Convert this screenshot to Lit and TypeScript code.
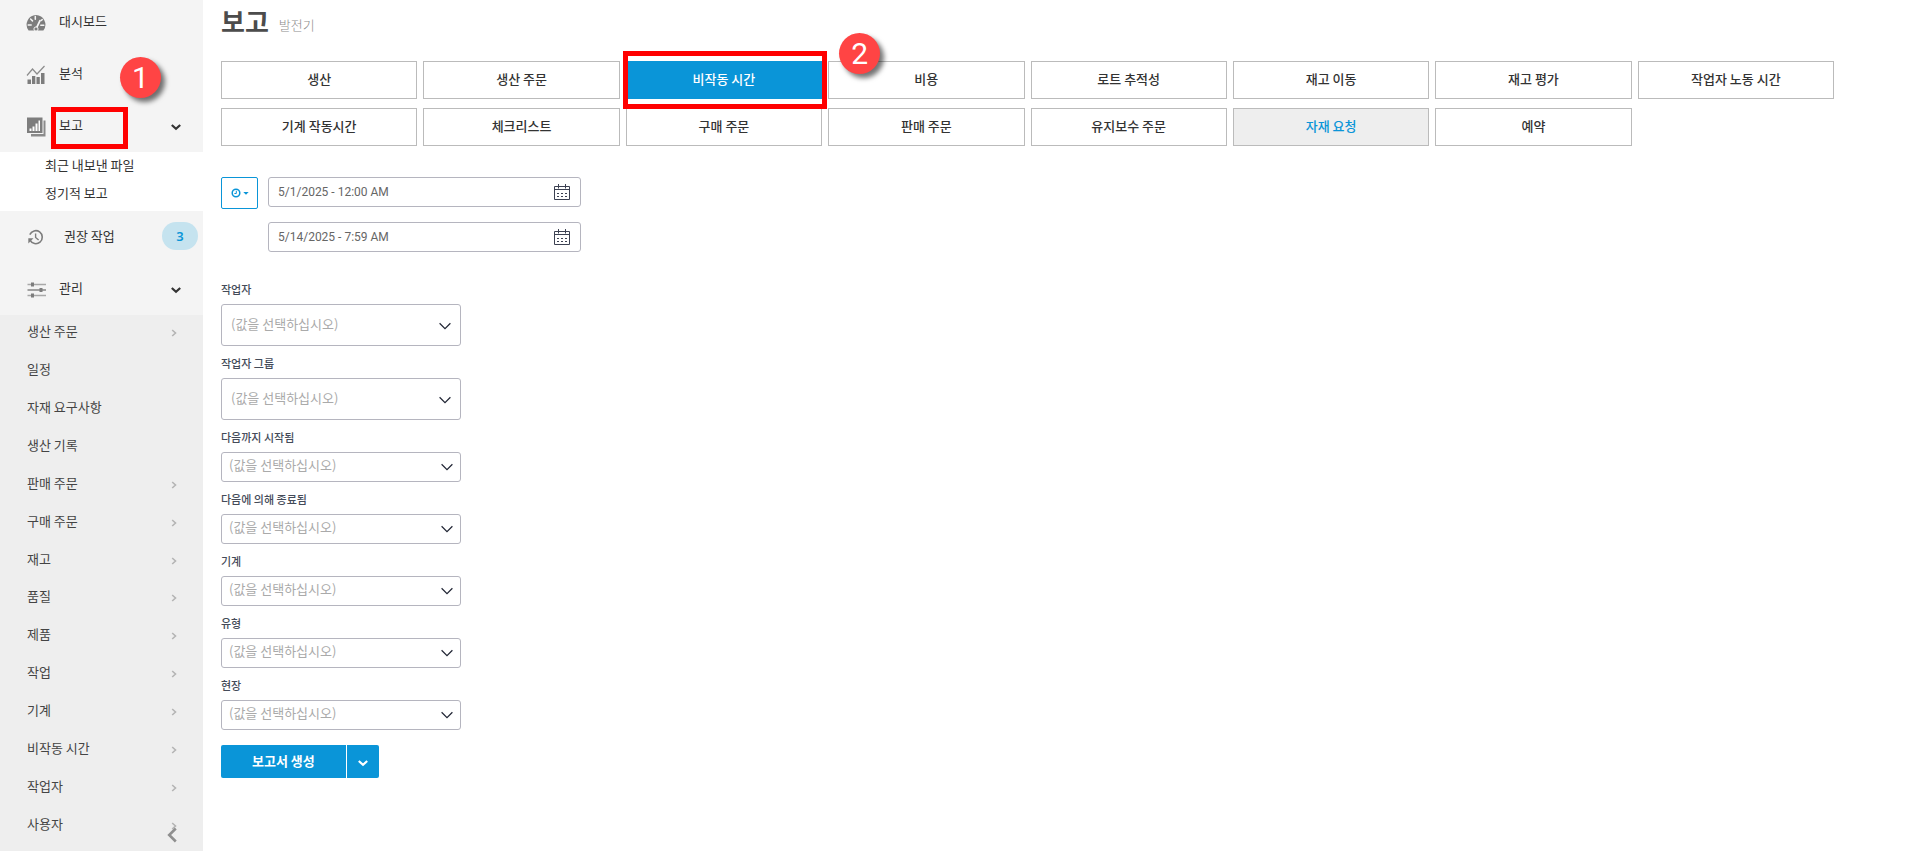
import { LitElement, css, html, svg, nothing } from "lit";
import { customElement, state } from "lit/decorators.js";
import { classMap } from "lit/directives/class-map.js";

const gaugeIcon = svg`
  <svg class="icon" viewBox="0 0 20 20" aria-hidden="true">
    <path d="M2.600 17.400A9.600 9.600 0 0 1 10 2a9.600 9.600 0 0 1 7.400 15.400H11.800a2 2 0 0 0-3.600 0z" fill="#7d7d7d"/>
    <path d="M10.200 15.600 14 7.600" stroke="#f4f4f4" stroke-width="1.800" stroke-linecap="round"/>
    <circle cx="10" cy="16" r="2.100" fill="#7d7d7d" stroke="#f4f4f4" stroke-width="1"/>
    <path d="M9.300 3.600v2.600M4.600 6l1.900 1.900M2.200 12h3M14.800 12.200h3M16.200 6.600l-1 .9" stroke="#f4f4f4" stroke-width="1.500" stroke-linecap="round"/>
  </svg>`;

const analyticsIcon = svg`
  <svg class="icon" viewBox="0 0 20 20" aria-hidden="true">
    <path d="M1.500 14.500h3.500v4.500h-3.500zM6 11h3.300v8H6zM10.500 12h3.300v7h-3.300zM15 8h3.500v11H15z" fill="#7d7d7d"/>
    <path d="M1 10.500 6.500 4l4.500 5L18.500 1" fill="none" stroke="#8c8c8c" stroke-width="1.200"/>
  </svg>`;

const reportIcon = svg`
  <svg class="icon" viewBox="0 0 20 20" aria-hidden="true">
    <path d="M1 .5h15.500V16H1z" fill="#7d7d7d"/>
    <path d="M17.500 3.500H19.500v16H5V17h12.500z" fill="#8a8a8a"/>
    <path d="M3.500 11.500h2V14h-2zM6.500 9.500h2V14h-2zM9.500 6.500h2V14h-2zM12.500 3.500h1.500V14h-1.500z" fill="#fff"/>
  </svg>`;

const historyIcon = svg`
  <svg class="icon" viewBox="0 0 20 20" aria-hidden="true">
    <path d="M4 12.200A6.500 6.500 0 1 0 3.800 6.600" fill="none" stroke="#7d7d7d" stroke-width="1.600"/>
    <path d="M2.300 15.500v-5.200h5.200z" fill="#7d7d7d"/>
    <path d="M9.600 5.500v4l3 2.500" fill="none" stroke="#7d7d7d" stroke-width="1.400"/>
  </svg>`;

const slidersIcon = svg`
  <svg class="icon" viewBox="0 0 20 20" aria-hidden="true">
    <path d="M1.500 4.500h18.500M1.500 15.500h18.500" stroke="#a8a8a8" stroke-width="1.600"/>
    <path d="M1.500 10h18.500" stroke="#7d7d7d" stroke-width="1.400"/>
    <path d="M5 2.500h3v4H5zM13.500 8h3v4h-3zM5 13.500h3v4H5z" fill="#7d7d7d"/>
  </svg>`;

const boldChevronDown = svg`
  <svg class="caret" viewBox="0 0 12 8" aria-hidden="true">
    <path d="m1.800 2 4.200 3.800L10.200 2" fill="none" stroke="currentColor" stroke-width="2.200"/>
  </svg>`;

const chevronRight = svg`
  <svg class="arrow" viewBox="0 0 6 8" aria-hidden="true">
    <path d="m1.200 1 3.300 3-3.300 3" fill="none" stroke="currentColor" stroke-width="1.600"/>
  </svg>`;

const thinChevronDown = svg`
  <svg class="select-mark" viewBox="0 0 12 8" aria-hidden="true">
    <path d="M.6 1.300 6 6.600l5.400-5.300" fill="none" stroke="#1f2433" stroke-width="1.200"/>
  </svg>`;

const calendarIcon = svg`
  <svg class="calendar" viewBox="0 0 16 16" aria-hidden="true">
    <path d="M.5 2.500h15v13H.5zM.5 5.500h15M4.500 0v4.500M11.500 0v4.500" fill="none" stroke="#3c4152"/>
    <path d="M3 9.500h10M3 12.500h10" fill="none" stroke="#3c4152" stroke-dasharray="2 2"/>
  </svg>`;

const clockIcon = svg`
  <svg class="clock" viewBox="0 0 18 10" aria-hidden="true">
    <circle cx="5" cy="5" r="3.800" fill="none" stroke="currentColor" stroke-width="1.500"/>
    <path d="M5.300 2.800v2.700H3.400" fill="none" stroke="currentColor" stroke-width="1"/>
    <path d="M12.300 4h5.400L15 6.800z" fill="currentColor"/>
  </svg>`;

interface ManageItem {
  label: string;
  nested: boolean;
}

interface Field {
  id: string;
  label: string;
  tall?: boolean;
}

@customElement("app-root")
export class AppRoot extends LitElement {
  @state() private activeTab = "비작동 시간";

  private readonly hoveredTab = "자재 요청";

  private readonly tabs = [
    "생산", "생산 주문", "비작동 시간", "비용", "로트 추적성", "재고 이동", "재고 평가", "작업자 노동 시간",
    "기계 작동시간", "체크리스트", "구매 주문", "판매 주문", "유지보수 주문", "자재 요청", "예약",
  ];

  private readonly manageItems: ManageItem[] = [
    { label: "생산 주문", nested: true },
    { label: "일정", nested: false },
    { label: "자재 요구사항", nested: false },
    { label: "생산 기록", nested: false },
    { label: "판매 주문", nested: true },
    { label: "구매 주문", nested: true },
    { label: "재고", nested: true },
    { label: "품질", nested: true },
    { label: "제품", nested: true },
    { label: "작업", nested: true },
    { label: "기계", nested: true },
    { label: "비작동 시간", nested: true },
    { label: "작업자", nested: true },
    { label: "사용자", nested: true },
  ];

  private readonly fields: Field[] = [
    { id: "worker", label: "작업자", tall: true },
    { id: "worker-group", label: "작업자 그룹", tall: true },
    { id: "started-by", label: "다음까지 시작됨" },
    { id: "ended-by", label: "다음에 의해 종료됨" },
    { id: "machine", label: "기계" },
    { id: "type", label: "유형" },
    { id: "site", label: "현장" },
  ];

  static styles = css`
    :host {
      display: block;
      font-family: "Noto Sans CJK KR", "Noto Sans", sans-serif;
      font-size: 13px;
      line-height: 20px;
      color: #333;
      background: #fff;
    }
    * {
      box-sizing: border-box;
    }
    a {
      color: inherit;
      text-decoration: none;
    }
    button,
    input,
    select {
      font: inherit;
      margin: 0;
    }
    button {
      cursor: pointer;
    }
    ul {
      list-style: none;
      margin: 0;
      padding: 0;
    }
    svg {
      display: block;
      flex: none;
    }

    .layout {
      display: grid;
      grid-template-columns: 203px minmax(0, 1fr);
      min-height: 100vh;
    }

    .sidebar {
      position: relative;
      background: #f4f4f4;
      display: flex;
      flex-direction: column;
    }
    .group {
      display: flex;
      flex-direction: column;
      gap: 32px;
      padding: 11px 21px 17px 26px;
    }
    .group-lower {
      padding-top: 15px;
    }
    .entry {
      display: flex;
      align-items: center;
      height: 20px;
    }
    .icon {
      width: 20px;
      height: 20px;
      margin: 4px 13px 0 0;
    }
    .entry-label {
      position: relative;
      flex: 1;
    }
    .entry-wide .entry-label {
      padding-left: 5px;
    }
    .caret {
      width: 12px;
      height: 8px;
      margin-top: 4px;
    }
    .count {
      width: 36px;
      margin-right: -16px;
      border-radius: 14px;
      background: #c5e3ef;
      color: #0a95d8;
      font-family: "Noto Sans", sans-serif;
      font-weight: 600;
      line-height: 28px;
      text-align: center;
    }
    .submenu {
      background: #fff;
      padding: 0 0 3px 45px;
    }
    .submenu a {
      display: block;
      padding-bottom: 2px;
      line-height: 26px;
    }
    .manage {
      flex: 1;
      background: #eee;
      color: #444;
    }
    .manage a {
      display: flex;
      align-items: center;
      justify-content: space-between;
      padding: 6px 26px 12px 27px;
    }
    .manage li:nth-child(n + 8) a {
      padding-top: 5px;
      padding-bottom: 13px;
    }
    .arrow {
      width: 6px;
      height: 8px;
      margin-top: 4px;
      color: #b4b4b4;
    }
    .collapse {
      position: absolute;
      right: 26px;
      bottom: 8px;
      border: 0;
      padding: 0;
      background: none;
      color: #8f8f8f;
    }
    .collapse svg {
      width: 10px;
      height: 16px;
    }

    .frame {
      position: absolute;
      z-index: 1;
      border: 5px solid #ff0000;
      pointer-events: none;
    }
    .step {
      position: absolute;
      z-index: 2;
      width: 41px;
      height: 41px;
      border-radius: 50%;
      background: #ff4444;
      box-shadow: 4px 4px 5px rgba(0, 0, 0, 0.55);
      color: #fff;
      font: 30px/41px Roboto, sans-serif;
      text-align: center;
      pointer-events: none;
    }
    .frame-menu {
      left: -8px;
      top: -8px;
      width: 77px;
      height: 42px;
    }
    .step-menu {
      left: 61px;
      top: -58px;
    }
    .frame-tab {
      inset: -10px -5px -10px -3px;
    }
    .step-tab {
      right: -58px;
      top: -28px;
    }

    .main {
      padding: 3px 72px 40px 18px;
    }
    .heading {
      display: flex;
      align-items: center;
      gap: 10px;
      margin-bottom: 22px;
    }
    h1 {
      margin: 0;
      font-size: 26px;
      line-height: 36px;
      font-weight: 700;
      color: #4c4c4c;
    }
    .subtitle {
      padding-top: 8px;
      color: #8c8c8c;
      font-weight: 300;
    }
    .tabs {
      display: grid;
      grid-template-columns: repeat(8, minmax(0, 1fr));
      gap: 9px 6px;
    }
    .tab-cell {
      position: relative;
      display: grid;
    }
    .tab {
      height: 38px;
      padding: 0 0 2px;
      border: 1px solid #bbb;
      background: #fff;
      color: #333;
      font-weight: 500;
    }
    .tab.hovered {
      background: #eee;
      color: #0a95d8;
    }
    .tab.active {
      background: #0a95d8;
      border-color: #0a95d8;
      color: #fff;
    }

    .dates {
      display: flex;
      align-items: flex-start;
      gap: 10px;
      margin: 31px 0 29px;
    }
    .range {
      display: grid;
      place-items: center;
      width: 37px;
      height: 32px;
      padding: 0;
      border: 1px solid #0a95d8;
      border-radius: 2px;
      background: #fff;
      color: #0a95d8;
    }
    .clock {
      width: 18px;
      height: 10px;
    }
    .date-list {
      display: grid;
      gap: 15px;
      width: 313px;
    }
    .overlay {
      display: grid;
      align-items: center;
    }
    .overlay > * {
      grid-area: 1 / 1;
    }
    .date-input {
      width: 100%;
      height: 30px;
      padding: 0 40px 1px 9px;
      border: 1px solid #b5b5bf;
      border-radius: 3px;
      background: #fff;
      color: #666;
      font-family: Roboto, sans-serif;
      font-size: 12px;
    }
    .calendar {
      width: 16px;
      height: 16px;
      justify-self: end;
      margin-right: 11px;
      pointer-events: none;
    }

    .fields {
      display: grid;
      gap: 9px;
      width: 240px;
    }
    .field {
      display: grid;
      gap: 7px;
    }
    .field label {
      font-size: 11px;
      line-height: 16px;
      font-weight: 500;
      color: #444b59;
    }
    .field select {
      appearance: none;
      width: 100%;
      height: 30px;
      padding: 0 28px 4px 7px;
      border: 1px solid #b5b5bf;
      border-radius: 3px;
      background: #fff;
      color: #aaa;
    }
    .field.tall select {
      height: 42px;
      padding-left: 9px;
      padding-bottom: 3px;
    }
    .select-mark {
      width: 12px;
      height: 8px;
      justify-self: end;
      margin-right: 8px;
      pointer-events: none;
    }
    .tall .select-mark {
      margin: 2px 10px 0 0;
    }

    .actions {
      display: flex;
      gap: 1px;
      margin-top: 15px;
    }
    .primary {
      display: grid;
      place-items: center;
      height: 33px;
      border: 0;
      padding: 0 31px 1px;
      background: #0a95d8;
      color: #fff;
      font-weight: 700;
      border-radius: 2px 0 0 2px;
    }
    .primary.more {
      padding: 0 10px;
      border-radius: 0 2px 2px 0;
    }
    .more .caret {
      margin-top: 2px;
    }
  `;

  private renderSidebar() {
    return html`
      <nav class="sidebar" aria-label="메뉴">
        <div class="group">
          <a class="entry" href="#dashboard">${gaugeIcon}<span class="entry-label">대시보드</span></a>
          <a class="entry" href="#analytics">${analyticsIcon}<span class="entry-label">분석</span></a>
          <a class="entry" href="#reports">
            ${reportIcon}
            <span class="entry-label">보고
              <span class="frame frame-menu"></span>
              <span class="step step-menu">1</span>
            </span>
            ${boldChevronDown}
          </a>
        </div>
        <ul class="submenu">
          <li><a href="#exports">최근 내보낸 파일</a></li>
          <li><a href="#periodic">정기적 보고</a></li>
        </ul>
        <div class="group group-lower">
          <a class="entry entry-wide" href="#recommended">
            ${historyIcon}<span class="entry-label">권장 작업</span><span class="count">3</span>
          </a>
          <a class="entry" href="#manage">
            ${slidersIcon}<span class="entry-label">관리</span>${boldChevronDown}
          </a>
        </div>
        <ul class="manage">
          ${this.manageItems.map(
            (item) => html`<li>
              <a href="#manage"><span>${item.label}</span>${item.nested ? chevronRight : nothing}</a>
            </li>`
          )}
        </ul>
        <button class="collapse" type="button" aria-label="메뉴 접기">
          <svg viewBox="0 0 10 16" aria-hidden="true">
            <path d="M8.800 1.500 2.200 8l6.600 6.500" fill="none" stroke="currentColor" stroke-width="2.600"/>
          </svg>
        </button>
      </nav>
    `;
  }

  private renderTab(label: string) {
    const classes = {
      tab: true,
      active: label === this.activeTab,
      hovered: label === this.hoveredTab,
    };
    return html`
      <div class="tab-cell">
        <button class=${classMap(classes)} type="button" @click=${() => (this.activeTab = label)}>${label}</button>
        ${label === "비작동 시간"
          ? html`<span class="frame frame-tab"></span><span class="step step-tab">2</span>`
          : nothing}
      </div>
    `;
  }

  private renderDate(label: string, value: string) {
    return html`
      <div class="overlay">
        <input class="date-input" type="text" aria-label=${label} .value=${value} />
        ${calendarIcon}
      </div>
    `;
  }

  private renderField(field: Field) {
    return html`
      <div class=${classMap({ field: true, tall: !!field.tall })}>
        <label for=${field.id}>${field.label}</label>
        <div class="overlay">
          <select id=${field.id}>
            <option value="">(값을 선택하십시오)</option>
          </select>
          ${thinChevronDown}
        </div>
      </div>
    `;
  }

  render() {
    return html`
      <div class="layout">
        ${this.renderSidebar()}
        <main class="main">
          <header class="heading">
            <h1>보고</h1>
            <span class="subtitle">발전기</span>
          </header>
          <div class="tabs">${this.tabs.map((label) => this.renderTab(label))}</div>
          <section class="dates">
            <button class="range" type="button" aria-label="기간 선택">${clockIcon}</button>
            <div class="date-list">
              ${this.renderDate("시작", "5/1/2025 - 12:00 AM")}
              ${this.renderDate("종료", "5/14/2025 - 7:59 AM")}
            </div>
          </section>
          <section class="fields">${this.fields.map((field) => this.renderField(field))}</section>
          <div class="actions">
            <button class="primary" type="button">보고서 생성</button>
            <button class="primary more" type="button" aria-label="추가 옵션">${boldChevronDown}</button>
          </div>
        </main>
      </div>
    `;
  }
}
